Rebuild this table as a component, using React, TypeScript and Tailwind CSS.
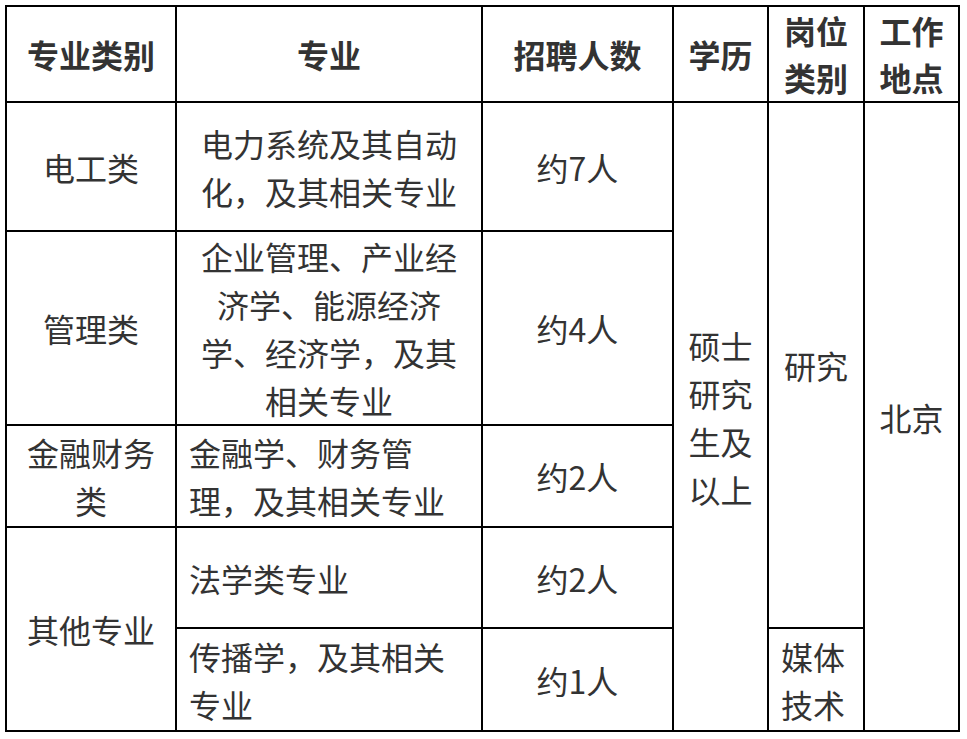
const td = "border-2 border-black px-3 py-0 align-middle";

export default function App() {
  return (
    <div
      className="bg-white p-[5px] text-[32px] leading-[48px] text-[#333]"
      style={{ fontFamily: '"Noto Sans CJK SC", "Noto Sans", sans-serif' }}
    >
      <table className="border-collapse table-fixed w-[955px]">
        <colgroup>
          <col className="w-[170px]" />
          <col className="w-[306px]" />
          <col className="w-[191px]" />
          <col className="w-[95px]" />
          <col className="w-[96px]" />
          <col className="w-[95px]" />
        </colgroup>
        <tbody>
          <tr className="h-[96px] font-bold leading-[47px]">
            <td className={`${td} text-center`}>专业类别</td>
            <td className={`${td} text-center`}>专业</td>
            <td className={`${td} text-center`}>招聘人数</td>
            <td className={`${td} text-center`}>学历</td>
            <td className={`${td} text-center`}>岗位类别</td>
            <td className={`${td} text-center`}>工作地点</td>
          </tr>
          <tr className="h-[129px]">
            <td className={`${td} text-center`}>电工类</td>
            <td className={`${td} text-center`}>电力系统及其自动化，及其相关专业</td>
            <td className={`${td} text-center`}>约7人</td>
            <td className={`${td} text-center`} rowSpan={5}>
              硕士研究生及以上
            </td>
            <td className={`${td} text-center`} rowSpan={4}>
              研究
            </td>
            <td className={`${td} text-center`} rowSpan={5}>
              北京
            </td>
          </tr>
          <tr className="h-[194px]">
            <td className={`${td} text-center`}>管理类</td>
            <td className={`${td} text-center`}>
              企业管理、产业经济学、能源经济学、经济学，及其相关专业
            </td>
            <td className={`${td} text-center`}>约4人</td>
          </tr>
          <tr className="h-[102px]">
            <td className={`${td} text-center`}>金融财务类</td>
            <td className={`${td} text-left`}>金融学、财务管理，及其相关专业</td>
            <td className={`${td} text-center`}>约2人</td>
          </tr>
          <tr className="h-[101px]">
            <td className={`${td} text-center`} rowSpan={2}>
              其他专业
            </td>
            <td className={`${td} text-left`}>法学类专业</td>
            <td className={`${td} text-center`}>约2人</td>
          </tr>
          <tr className="h-[103px]">
            <td className={`${td} text-left`}>传播学，及其相关专业</td>
            <td className={`${td} text-center`}>约1人</td>
            <td className={`${td} text-left`}>媒体技术</td>
          </tr>
        </tbody>
      </table>
    </div>
  );
}
